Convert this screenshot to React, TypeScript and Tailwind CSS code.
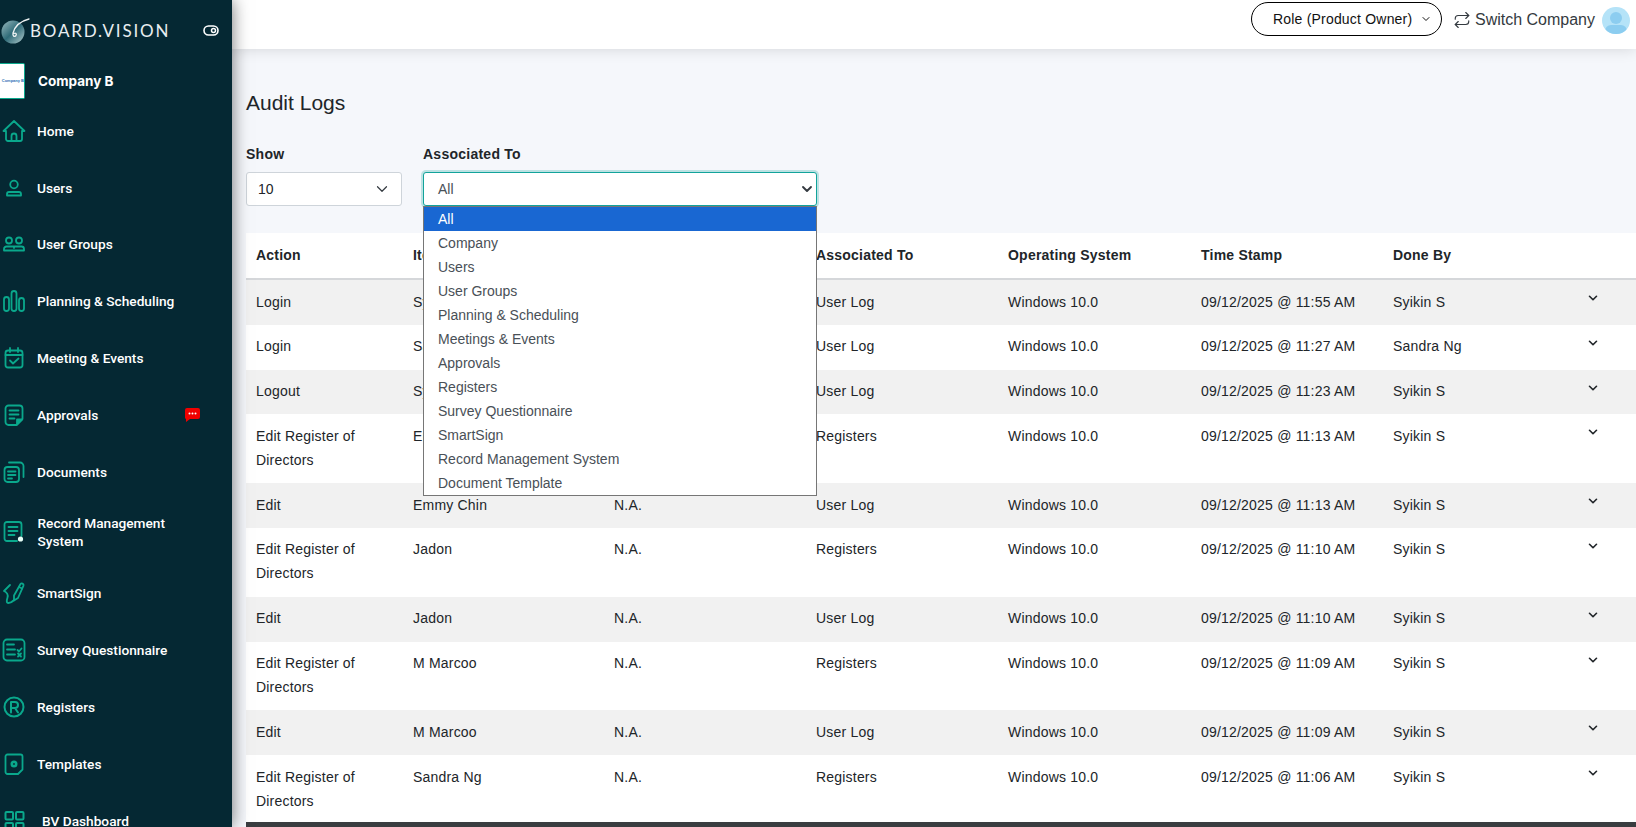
import { ChevronDown, Repeat } from "lucide-react";
import type { ReactNode } from "react";

const teal = "#0aa88c";

const Ico = ({ children }: { children: ReactNode }) => (
  <svg width="24" height="24" viewBox="0 0 24 24" fill="none" stroke={teal} strokeWidth="1.8" strokeLinecap="round" strokeLinejoin="round">
    {children}
  </svg>
);

const icons: Record<string, ReactNode> = {
  home: (
    <Ico>
      <path d="M1.500 12 12 2l10.500 10H20v8a2 2 0 0 1-2 2H6a2 2 0 0 1-2-2v-8z" />
      <path d="M9.500 22v-5a2.500 2.500 0 0 1 5 0v5" />
    </Ico>
  ),
  users: (
    <Ico>
      <circle cx="12" cy="8.500" r="3.800" />
      <path d="M5 19.500V18a2 2 0 0 1 2-2h10a2 2 0 0 1 2 2v1.500z" />
    </Ico>
  ),
  groups: (
    <Ico>
      <circle cx="7" cy="8.500" r="3" />
      <circle cx="17" cy="8.500" r="3" />
      <path d="M2 18.500V17a2.500 2.500 0 0 1 2.500-2.500h15A2.500 2.500 0 0 1 22 17v1.500zM12 14.500v1.500" />
    </Ico>
  ),
  planning: (
    <Ico>
      <rect x="2" y="8" width="5" height="14" rx="2.500" />
      <rect x="9.500" y="2" width="5" height="20" rx="2.500" />
      <rect x="17" y="9" width="5" height="13" rx="2.500" />
    </Ico>
  ),
  meeting: (
    <Ico>
      <rect x="3.500" y="4.500" width="17" height="17" rx="2.500" />
      <path d="M3.500 9h17M8 2v4M16 2v4M8 14.500l3 3 5.500-5" />
    </Ico>
  ),
  approvals: (
    <Ico>
      <path d="M6.500 2.500h11a3 3 0 0 1 3 3v10.500l-6 6h-8a3 3 0 0 1-3-3v-13.500a3 3 0 0 1 3-3z" />
      <path d="M7.500 7.500h9M7.500 11.500h9M7.500 15.500h5" />
      <path d="M20 16.500h-5v5z" fill={teal} />
    </Ico>
  ),
  documents: (
    <Ico>
      <rect x="2.500" y="7" width="14.500" height="15" rx="3" />
      <path d="M7 2.500h11a3.500 3.500 0 0 1 3.500 3.500v11M6 11.500h7.500M6 15h7.500M6 18.500h4" />
    </Ico>
  ),
  record: (
    <Ico>
      <path d="M15 21H5a2.500 2.500 0 0 1-2.500-2.500v-14A2.500 2.500 0 0 1 5 2h12a2.500 2.500 0 0 1 2.500 2.500V16" />
      <path d="M6.500 7h9M6.500 11h9M6.500 15h6" />
      <circle cx="18.500" cy="19" r="2.600" fill="#e8fff8" stroke="none" />
    </Ico>
  ),
  sign: (
    <Ico>
      <path d="M12 14.500 18.500 3c1-1.400 3.500-.2 3 1.600L16 17l-4 2.500z" />
      <path d="M17 6l3 1.500M8 4 2 10c3 1.500 4.500 3 3.500 6.500-.7 2.500-1.500 5.500 1 5.500 2 0 3.500-1 5-2.500" />
    </Ico>
  ),
  survey: (
    <Ico>
      <rect x="1.500" y="1.500" width="21" height="21" rx="3.500" />
      <path d="M5 6.500h7M5 11.500h8M5 16.500h8M15.500 12l1.500 1.500 2.500-3M16 15.500l3 3M19 15.500l-3 3" />
    </Ico>
  ),
  registers: (
    <Ico>
      <circle cx="12" cy="12" r="9.500" strokeWidth="2" />
      <path d="M9 17.500V7h4a3 3 0 0 1 0 6H9M13 13l3 4.500" strokeWidth="2" />
    </Ico>
  ),
  templates: (
    <Ico>
      <path d="M5.500 2.500h13a2 2 0 0 1 2 2v13l-4.500 4.500H5.500a2 2 0 0 1-2-2v-15.500a2 2 0 0 1 2-2z" />
      <circle cx="12" cy="12" r="2.200" strokeWidth="2.600" />
    </Ico>
  ),
  dashboard: (
    <Ico>
      <rect x="3.500" y="3" width="7.500" height="7.500" rx="1" strokeWidth="2" />
      <rect x="14" y="3" width="7.500" height="7.500" rx="1" strokeWidth="2" />
      <rect x="3.500" y="14" width="7.500" height="7.500" rx="1" strokeWidth="2" />
      <rect x="14" y="14" width="7.500" height="7.500" rx="1" strokeWidth="2" />
    </Ico>
  ),
};

const navItems = [
  { label: "Home", icon: "home", row: "h-[57px]", text: "ml-[11px]" },
  { label: "Users", icon: "users", row: "h-[57px]", text: "ml-[11px]" },
  { label: "User Groups", icon: "groups", row: "h-[56px]", text: "ml-[11px]" },
  { label: "Planning & Scheduling", icon: "planning", row: "h-[57px]", text: "ml-[11px]" },
  { label: "Meeting & Events", icon: "meeting", row: "h-[57px]", text: "ml-[11px]" },
  { label: "Approvals", icon: "approvals", row: "h-[57px]", text: "ml-[11px]", badge: true },
  { label: "Documents", icon: "documents", row: "h-[57px]", text: "ml-[11px]" },
  { label: "Record Management System", icon: "record", row: "h-[64px]", text: "ml-[11.500px]" },
  { label: "SmartSign", icon: "sign", row: "h-[57px]", text: "ml-[11px]" },
  { label: "Survey Questionnaire", icon: "survey", row: "h-[57px]", text: "ml-[11px]" },
  { label: "Registers", icon: "registers", row: "h-[57px]", text: "ml-[11px]" },
  { label: "Templates", icon: "templates", row: "h-[57px]", text: "ml-[11px]" },
  { label: "BV Dashboard", icon: "dashboard", row: "h-[57px]", text: "ml-[16px]" },
];

const options = [
  "All",
  "Company",
  "Users",
  "User Groups",
  "Planning & Scheduling",
  "Meetings & Events",
  "Approvals",
  "Registers",
  "Survey Questionnaire",
  "SmartSign",
  "Record Management System",
  "Document Template",
];

const logs = [
  ["Login", "Syikin S", "N.A.", "User Log", "11:55 AM", "Syikin S"],
  ["Login", "Sandra Ng", "N.A.", "User Log", "11:27 AM", "Sandra Ng"],
  ["Logout", "Syikin S", "N.A.", "User Log", "11:23 AM", "Syikin S"],
  ["Edit Register of Directors", "Emmy Chin", "N.A.", "Registers", "11:13 AM", "Syikin S"],
  ["Edit", "Emmy Chin", "N.A.", "User Log", "11:13 AM", "Syikin S"],
  ["Edit Register of Directors", "Jadon", "N.A.", "Registers", "11:10 AM", "Syikin S"],
  ["Edit", "Jadon", "N.A.", "User Log", "11:10 AM", "Syikin S"],
  ["Edit Register of Directors", "M Marcoo", "N.A.", "Registers", "11:09 AM", "Syikin S"],
  ["Edit", "M Marcoo", "N.A.", "User Log", "11:09 AM", "Syikin S"],
  ["Edit Register of Directors", "Sandra Ng", "N.A.", "Registers", "11:06 AM", "Syikin S"],
];

const Logo = () => (
  <svg width="30" height="30" viewBox="0 0 30 30">
    <defs>
      <linearGradient id="orb" x1="0" y1="0" x2="1" y2="1">
        <stop offset="0" stopColor="#9dbcc0" />
        <stop offset="0.5" stopColor="#2f6b78" />
        <stop offset="1" stopColor="#b4cccd" />
      </linearGradient>
    </defs>
    <circle cx="13" cy="17" r="11.500" fill="url(#orb)" />
    <path d="M29 4C21 6 15 11 13 18c-.6 3 1.500 4.500 3 2.500 1-1.500-.5-3-2-2" fill="none" stroke="#eef2f2" strokeWidth="1.300" strokeLinecap="round" />
  </svg>
);

const Sidebar = () => (
  <aside className="relative z-20 flex h-full w-[232px] shrink-0 flex-col overflow-hidden bg-[#052833] text-white shadow-[0_0_16px_rgba(0,0,0,0.55)]">
    <div className="flex h-[60px] shrink-0 items-center">
      <Logo />
      <span className="font-['Lato',sans-serif] text-[17px] leading-none tracking-[1.8px] text-[#e9eef0]">BOARD.VISION</span>
      <svg className="ml-auto mr-[13px]" width="16" height="11" viewBox="0 0 16 11" fill="none">
        <rect x="1" y="1" width="14" height="9" rx="4.500" stroke="#fff" strokeWidth="1.600" />
        <circle cx="10.500" cy="5.500" r="2" stroke="#fff" strokeWidth="1.500" />
      </svg>
    </div>
    <div className="flex h-[42px] shrink-0 items-start pt-[3px]">
      <div className="flex h-[36px] w-[25px] items-center justify-end overflow-hidden rounded-r-[2px] border border-l-0 border-[#0aa88c] bg-white">
        <span className="whitespace-nowrap text-[4px] font-bold text-[#2a6fb5]">Company B</span>
      </div>
      <span className="ml-[13px] mt-[8px] font-['Inter',sans-serif] text-[13.500px] font-bold">Company B</span>
    </div>
    {navItems.map((item) => (
      <div key={item.label} className={`flex shrink-0 items-center ${item.row}`}>
        <div className="flex w-[26px] shrink-0 justify-center pl-[1px]">{icons[item.icon]}</div>
        <span className={`w-[150px] font-['Roboto',sans-serif] text-[13.700px] font-medium leading-[18px] ${item.text}`}>
          {item.label}
        </span>
        {item.badge && (
          <svg className="ml-[-2px]" width="15" height="14" viewBox="0 0 15 14">
            <path d="M2 0h11a2 2 0 0 1 2 2v7a2 2 0 0 1-2 2H5l-4 3V11a2 2 0 0 1-1-2V2a2 2 0 0 1 2-2z" fill="#f00000" />
            <circle cx="4.500" cy="5.500" r="1" fill="#fff" />
            <circle cx="7.500" cy="5.500" r="1" fill="#fff" />
            <circle cx="10.500" cy="5.500" r="1" fill="#fff" />
          </svg>
        )}
      </div>
    ))}
  </aside>
);

const TopBar = () => (
  <header className="relative z-10 flex h-[49px] shrink-0 items-start justify-end bg-white pt-[2px] pr-[6px] shadow-[0_0_14px_rgba(0,0,0,0.14)]">
    <div className="flex h-[34px] w-[191px] items-center rounded-full border border-black pl-[21px] text-[14px] tracking-[0.2px] text-[#111]">
      Role (Product Owner)
      <ChevronDown className="ml-[8px]" size={12} strokeWidth={2} />
    </div>
    <div className="ml-[11px] flex h-[34px] items-center pt-[1px] text-[16px] text-[#343a40]">
      <Repeat size={18} strokeWidth={1.500} className="mr-[4px]" />
      Switch Company
    </div>
    <div className="relative ml-[7px] mt-[5px] h-[27px] w-[28px] overflow-hidden rounded-full bg-[#b5e3f8]">
      <div className="mx-auto mt-[5px] h-[12px] w-[12px] rounded-full bg-[#8ccdf0]" />
      <div className="mx-auto mt-[1px] h-[12px] w-[22px] rounded-full bg-[#8ccdf0]" />
    </div>
  </header>
);

const Filters = () => (
  <div className="flex">
    <div className="w-[156px]">
      <div className="mb-[8px] h-[20px] text-[14px] font-bold leading-[20px] tracking-[0.25px] text-[#212529]">Show</div>
      <div className="flex h-[34px] items-center justify-between rounded-[3px] border border-[#ced4da] bg-white pr-[10px] pl-[11px] text-[14px] text-[#212529]">
        10
        <ChevronDown size={18} strokeWidth={1.600} className="text-[#343a40]" />
      </div>
    </div>
    <div className="relative ml-[21px] w-[394px]">
      <div className="mb-[8px] h-[20px] text-[14px] font-bold leading-[20px] tracking-[0.25px] text-[#212529]">Associated To</div>
      <div className="flex h-[34px] items-center justify-between rounded-[3px] border border-[#12a39b] bg-white pr-[1px] pl-[14px] text-[14px] text-[#495057] shadow-[0_0_0_2px_rgba(18,163,155,0.25)]">
        All
        <ChevronDown size={16} strokeWidth={2.800} className="text-[#343a40]" />
      </div>
      <ul className="absolute top-[62px] left-0 z-30 w-[394px] border border-[#767676] bg-white text-[14px] text-[#495057]">
        {options.map((o, i) => (
          <li key={o} className={`h-[24px] pl-[14px] leading-[24px] ${i === 0 ? "bg-[#1967d2] text-white" : ""}`}>
            {o}
          </li>
        ))}
      </ul>
    </div>
  </div>
);

const LogTable = () => (
  <table className="mt-[27px] w-[1390px] table-fixed border-collapse bg-white text-[14px] text-[#212529]">
    <colgroup>
      <col className="w-[157px]" />
      <col className="w-[201px]" />
      <col className="w-[202px]" />
      <col className="w-[192px]" />
      <col className="w-[193px]" />
      <col className="w-[192px]" />
      <col className="w-[200px]" />
      <col />
    </colgroup>
    <thead>
      <tr className="h-[46px] border-b-2 border-[#d5d7da] text-left tracking-[0.22px]">
        <th className="pl-[10px] font-bold">Action</th>
        <th className="pl-[10px] font-bold">Item</th>
        <th className="pl-[10px] font-bold">Details</th>
        <th className="pl-[10px] font-bold">Associated To</th>
        <th className="pl-[10px] font-bold">Operating System</th>
        <th className="pl-[10px] font-bold">Time Stamp</th>
        <th className="pl-[10px] font-bold">Done By</th>
        <th />
      </tr>
    </thead>
    <tbody>
      {logs.map((r, i) => (
        <tr key={i} className={`leading-[24px] tracking-[0.2px] ${i % 2 === 0 ? "bg-[#f1f1f1]" : "bg-white"}`}>
          <td className="pt-[9.500px] pr-[10px] pb-[11.300px] pl-[10px] align-top">{r[0]}</td>
          <td className="pt-[9.500px] pl-[10px] align-top">{r[1]}</td>
          <td className="pt-[9.500px] pl-[10px] align-top">{r[2]}</td>
          <td className="pt-[9.500px] pl-[10px] align-top">{r[3]}</td>
          <td className="pt-[9.500px] pl-[10px] align-top">Windows 10.0</td>
          <td className="pt-[9.500px] pl-[10px] align-top whitespace-nowrap">09/12/2025 @ {r[4]}</td>
          <td className="pt-[9.500px] pl-[10px] align-top">{r[5]}</td>
          <td className="pt-[11px] pl-[3px] align-top">
            <ChevronDown size={14} strokeWidth={2.800} />
          </td>
        </tr>
      ))}
    </tbody>
  </table>
);

export default function App() {
  return (
    <div className="flex h-screen w-full overflow-hidden bg-[#f5f7fb] font-['Liberation_Sans',sans-serif]">
      <Sidebar />
      <div className="flex h-full min-w-0 flex-1 flex-col">
        <TopBar />
        <main className="relative min-h-0 flex-1 overflow-hidden pt-[39px] pl-[14px]">
          <h1 className="mb-[26px] text-[21px] leading-[30px] text-[#212529]">Audit Logs</h1>
          <Filters />
          <LogTable />
          <div className="absolute right-0 bottom-0 left-[14px] h-[5px] bg-[#3a3d40]" />
        </main>
      </div>
    </div>
  );
}
